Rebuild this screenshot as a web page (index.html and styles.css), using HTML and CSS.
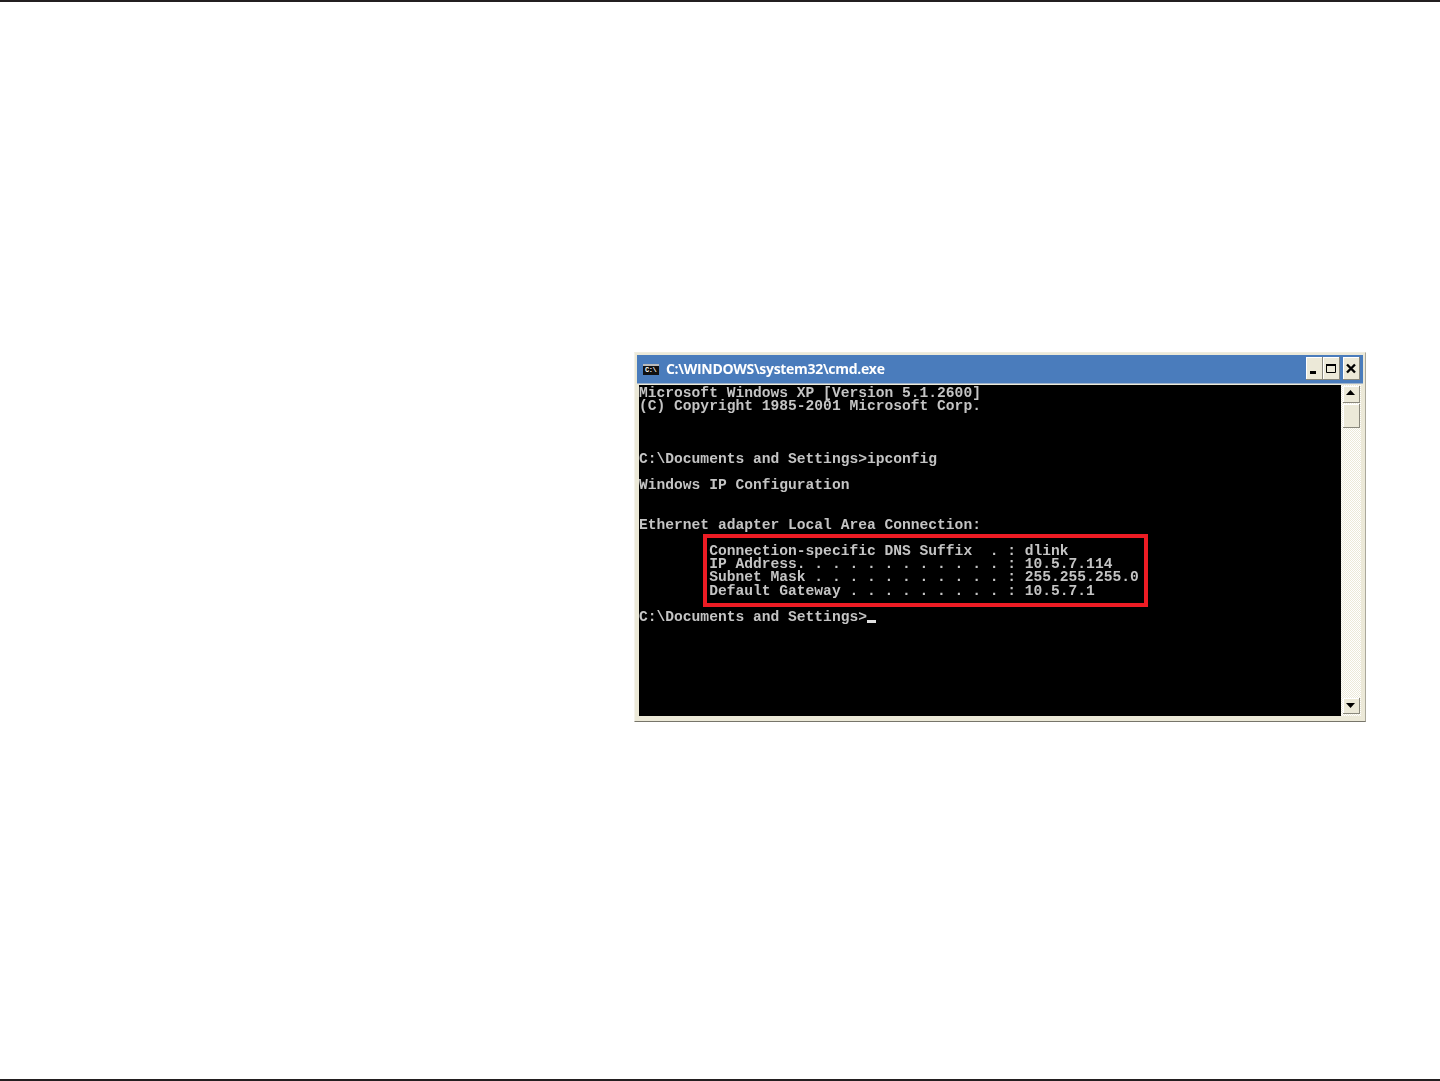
FILE: index.html
```html
<!DOCTYPE html>
<html lang="en">
<head>
<meta charset="utf-8">
<title>ipconfig</title>
<link rel="stylesheet" href="styles.css">
</head>
<body>
<div class="rule"></div>
<main class="page">
  <section class="window">
    <header class="titlebar">
      <span class="app-icon">C:\</span>
      <span class="title">C:\WINDOWS\system32\cmd.exe</span>
      <div class="controls">
        <button class="ctl" aria-label="Minimize"><svg width="16" height="22" viewBox="0 0 16 22"><rect x="4" y="14" width="6" height="3" fill="#000"/></svg></button>
        <button class="ctl" aria-label="Maximize"><svg width="16" height="22" viewBox="0 0 16 22"><path d="M3.5 7.5h9v8h-9z" fill="none" stroke="#000"/><rect x="3" y="7" width="10" height="2" fill="#000"/></svg></button>
        <button class="ctl ctl-close" aria-label="Close"><svg width="16" height="22" viewBox="0 0 16 22"><path d="M4 7.5l8 8M12 7.5l-8 8" stroke="#000" stroke-width="2.4" fill="none"/></svg></button>
      </div>
    </header>
    <div class="client">
      <div class="console">
<pre class="output">Microsoft Windows XP [Version 5.1.2600]
(C) Copyright 1985-2001 Microsoft Corp.



C:\Documents and Settings&gt;ipconfig

Windows IP Configuration


Ethernet adapter Local Area Connection:

        Connection-specific DNS Suffix  . : dlink
        IP Address. . . . . . . . . . . . : 10.5.7.114
        Subnet Mask . . . . . . . . . . . : 255.255.255.0
        Default Gateway . . . . . . . . . : 10.5.7.1

C:\Documents and Settings&gt;<span class="cursor"></span></pre>
        <div class="highlight"></div>
      </div>
      <aside class="scrollbar">
        <div class="sb-btn"><svg width="17" height="17" viewBox="0 0 17 17"><path d="M8.5 5l4.5 5H4z" fill="#000"/></svg></div>
        <div class="sb-thumb"></div>
        <div class="sb-btn sb-down"><svg width="17" height="15" viewBox="0 0 17 15"><path d="M8.5 11L4 6h9z" fill="#000"/></svg></div>
      </aside>
    </div>
  </section>
</main>
<div class="rule"></div>
</body>
</html>
```
FILE: styles.css
```css
html, body {
  margin: 0;
  height: 100%;
  background: #fff;
}
body {
  display: flex;
  flex-direction: column;
  overflow: hidden;
}
.rule {
  height: 2px;
  flex: none;
  background: #231f20;
}
.page {
  flex: 1;
  padding: 350px 0 0 634px;
}
.window {
  box-sizing: border-box;
  width: 732px;
  height: 370px;
  padding: 2px 2px 1px;
  background: #ece9d8;
  border-top: 1px solid #efece0;
  border-bottom: 1px solid #77756a;
  border-left: 1px solid #f4f2ea;
  border-right: 1px solid #a9a79a;
  display: flex;
  flex-direction: column;
}
.titlebar {
  height: 29px;
  flex: none;
  display: flex;
  align-items: center;
  padding-left: 6px;
  background: #4a7cbc;
  border-bottom: 1px solid #9fb3cc;
  box-sizing: border-box;
}
.app-icon {
  box-sizing: border-box;
  width: 16px;
  height: 11px;
  background: #111;
  border-top: 2px solid #bbb;
  color: #fff;
  font: bold 7px/8px "Liberation Mono", monospace;
  letter-spacing: -0.5px;
  padding-left: 2px;
  overflow: hidden;
}
.title {
  margin-left: 7px;
  margin-bottom: 2px;
  color: #fff;
  font: bold 14px/27px "Open Sans", "Liberation Sans", sans-serif;
  letter-spacing: -0.31px;
  white-space: nowrap;
  filter: blur(0.3px);
}
.controls {
  margin-left: auto;
  display: flex;
  padding-right: 3px;
  margin-bottom: 2px;
}
.ctl {
  box-sizing: border-box;
  width: 17px;
  height: 23px;
  padding: 0;
  margin: 0;
  display: block;
  background: #ece9d8;
  border: 0;
  border-right: 1px solid #8a887c;
  border-bottom: 1px solid #8a887c;
  box-shadow: inset 1px 1px 0 #fff;
}
.ctl svg {
  display: block;
}
.ctl-close {
  margin-left: 3px;
}
.client {
  flex: 1;
  min-height: 0;
  display: flex;
  margin-top: 1px;
  margin-bottom: 4px;
  padding-left: 2px;
  margin-right: 2px;
}
.console {
  flex: 1;
  position: relative;
  background: #000;
  overflow: hidden;
}
.output {
  margin: 0;
  padding: 2px 0 0 0;
  color: #c4c4c4;
  font: bold 14.62px/13.17px "Liberation Mono", monospace;
  filter: blur(0.35px);
}
.cursor {
  display: inline-block;
  width: 9px;
  height: 3px;
  background: #e0e0e0;
  vertical-align: -2px;
}
.highlight {
  position: absolute;
  left: 64px;
  top: 149px;
  width: 437px;
  height: 65px;
  border: 4px solid #ed1c24;
}
.scrollbar {
  width: 20px;
  flex: none;
  box-sizing: border-box;
  padding: 1px 1px 2px 2px;
  display: flex;
  flex-direction: column;
  background: repeating-conic-gradient(#fff 0 25%, #ece9d8 0 50%) 0 0 / 2px 2px;
}
.sb-btn {
  box-sizing: border-box;
  width: 17px;
  height: 17px;
  flex: none;
  background: #ece9d8;
  border-right: 1px solid #8a887c;
  border-bottom: 1px solid #8a887c;
  box-shadow: inset 1px 1px 0 #fff;
}
.sb-btn svg {
  display: block;
  margin: -1px 0 0 -1px;
}
.sb-thumb {
  box-sizing: border-box;
  width: 17px;
  height: 24px;
  margin-top: 1px;
  flex: none;
  background: #ece9d8;
  border-right: 1px solid #8a887c;
  border-bottom: 1px solid #8a887c;
  box-shadow: inset 1px 1px 0 #fff;
}
.sb-down {
  height: 16px;
  margin-top: auto;
}
```
